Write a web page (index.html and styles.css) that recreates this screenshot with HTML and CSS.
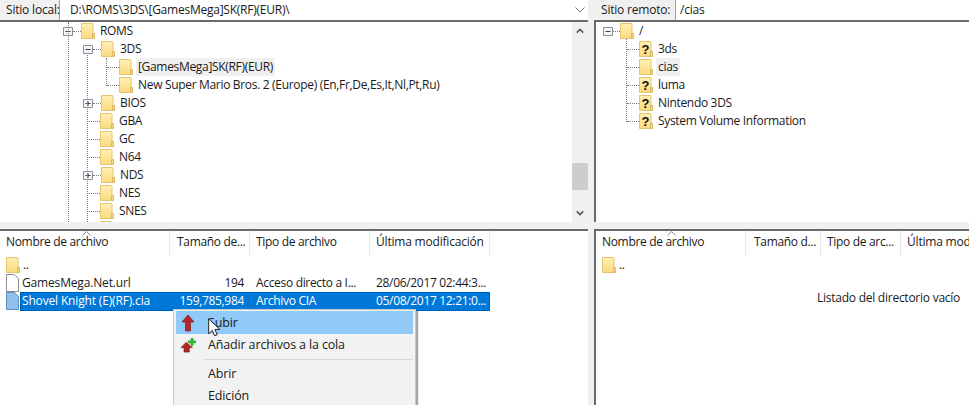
FILE: index.html
```html
<!DOCTYPE html>
<html lang="es">
<head>
<meta charset="utf-8">
<title>Sitio local y remoto</title>
<link rel="stylesheet" href="styles.css">
</head>
<body>
<svg class="defs" aria-hidden="true">
  <defs>
    <linearGradient id="fg" x1="0" y1="0" x2="0" y2="1">
      <stop offset="0" stop-color="#fff0b4"/>
      <stop offset="1" stop-color="#fbd97e"/>
    </linearGradient>
    <symbol id="folder" viewBox="0 0 14 16">
      <path d="M.5.5h11l.5 1v14H.5z" fill="url(#fg)" stroke="#e6c470"/>
      <path d="M11.5 10.500h2v5h-2z" fill="#f7d67c" stroke="#dcb863"/>
    </symbol>
    <symbol id="qfolder" viewBox="0 0 14 16">
      <path d="M.5.5h11l.5 1v14H.5z" fill="url(#fg)" stroke="#e6c470"/>
      <path d="M11.500 10.500h2v5h-2z" fill="#f7d67c" stroke="#dcb863"/>
      <text x="6.500" y="13" class="qmark">?</text>
    </symbol>
    <symbol id="minus" viewBox="0 0 10 9">
      <path d="M.5.500h9v8h-9z" fill="#f4f4f6" stroke="#8a8f9a"/>
      <path d="M2.500 4.500h5" stroke="#3c4048"/>
    </symbol>
    <symbol id="plus" viewBox="0 0 10 9">
      <path d="M.5.500h9v8h-9z" fill="#f4f4f6" stroke="#8a8f9a"/>
      <path d="M2.500 4.500h5M5 2v5" stroke="#3c4048"/>
    </symbol>
  </defs>
</svg>

<main class="app">
  <section class="pane pane-local">
    <div class="bar">
      <span class="bar-label bar-label-local">Sitio local:</span>
      <span class="bar-path">D:\ROMS\3DS\[GamesMega]SK(RF)(EUR)\</span>
      <svg class="combo" viewBox="0 0 10 6"><path d="M.5.500 5 5 9.500.5" fill="none" stroke="#7a7a7a"/></svg>
    </div>
    <div class="tree">
      <div class="tree-rows">
        <div class="guide gv g1"></div>
        <div class="guide gv g2"></div>
        <div class="guide gv g3"></div>
        <div class="row lv0"><svg class="exp"><use href="#minus"/></svg><i class="dash"></i><svg class="fold"><use href="#folder"/></svg><span class="name">ROMS</span></div>
        <div class="row lv1"><svg class="exp"><use href="#minus"/></svg><i class="dash"></i><svg class="fold"><use href="#folder"/></svg><span class="name">3DS</span></div>
        <div class="row lv2"><i class="dash long"></i><svg class="fold"><use href="#folder"/></svg><span class="name current">[GamesMega]SK(RF)(EUR)</span></div>
        <div class="row lv2"><i class="dash long"></i><svg class="fold"><use href="#folder"/></svg><span class="name">New Super Mario Bros. 2 (Europe) (En,Fr,De,Es,It,Nl,Pt,Ru)</span></div>
        <div class="row lv1"><svg class="exp"><use href="#plus"/></svg><i class="dash"></i><svg class="fold"><use href="#folder"/></svg><span class="name">BIOS</span></div>
        <div class="row lv1"><i class="dash long"></i><svg class="fold"><use href="#folder"/></svg><span class="name">GBA</span></div>
        <div class="row lv1"><i class="dash long"></i><svg class="fold"><use href="#folder"/></svg><span class="name">GC</span></div>
        <div class="row lv1"><i class="dash long"></i><svg class="fold"><use href="#folder"/></svg><span class="name">N64</span></div>
        <div class="row lv1"><svg class="exp"><use href="#plus"/></svg><i class="dash"></i><svg class="fold"><use href="#folder"/></svg><span class="name">NDS</span></div>
        <div class="row lv1"><i class="dash long"></i><svg class="fold"><use href="#folder"/></svg><span class="name">NES</span></div>
        <div class="row lv1"><i class="dash long"></i><svg class="fold"><use href="#folder"/></svg><span class="name">SNES</span></div>
        <div class="row lv1"><i class="dash long"></i><svg class="fold"><use href="#folder"/></svg></div>
      </div>
      <div class="scroll">
        <svg class="arrow" viewBox="0 0 10 6"><path d="M1 5 5 1l4 4" fill="none" stroke="#555" stroke-width="2"/></svg>
        <div class="track"><div class="thumb"></div></div>
        <svg class="arrow" viewBox="0 0 10 6"><path d="M1 1l4 4 4-4" fill="none" stroke="#555" stroke-width="2"/></svg>
      </div>
    </div>
    <div class="split"></div>
    <div class="list list-local">
      <div class="head">
        <span class="col c-name">Nombre de archivo<svg class="sort" viewBox="0 0 9 5"><path d="M.5 4.500 4.500.5l4 4" fill="none" stroke="#8a8a8a"/></svg></span>
        <span class="col c-size">Tamaño de...</span>
        <span class="col c-type">Tipo de archivo</span>
        <span class="col c-date">Última modificación</span>
      </div>
      <div class="file"><svg class="fold"><use href="#folder"/></svg><span class="up">..</span></div>
      <div class="file">
        <svg class="doc" viewBox="0 0 13 18"><path d="M.5.500h8l4 4v13H.5z" fill="#fff" stroke="#8f8f8f"/></svg>
        <span class="band">
          <span class="cell f-name">GamesMega.Net.url</span>
          <span class="cell f-size">194</span>
          <span class="cell f-type">Acceso directo a I...</span>
          <span class="cell f-date">28/06/2017 02:44:3...</span>
        </span>
      </div>
      <div class="file">
        <svg class="doc" viewBox="0 0 13 18"><path d="M.5.500h8l4 4v13H.5z" fill="#8fc1ec" stroke="#5f8fb8"/></svg>
        <span class="band band-selected">
          <span class="cell f-name">Shovel Knight (E)(RF).cia</span>
          <span class="cell f-size">159,785,984</span>
          <span class="cell f-type">Archivo CIA</span>
          <span class="cell f-date">05/08/2017 12:21:0...</span>
        </span>
      </div>
      <div class="menu">
        <div class="item hot">
          <svg class="mi" viewBox="0 0 16 18"><path d="M8 1 14 8h-3.500v9h-5V8H2z" fill="#b3262c" stroke="#7d1b20" stroke-width=".7"/></svg>
          <span>Subir</span>
        </div>
        <div class="item">
          <svg class="mi" viewBox="0 0 18 18"><path d="M7 6 14 12h-3.500v5h-6v-5H1z" fill="#b3262c" stroke="#7d1b20" stroke-width=".7"/><path d="M12 1h3v3h3v3h-3v3h-3V7H9V4h3z" fill="#34b233"/></svg>
          <span>Añadir archivos a la cola</span>
        </div>
        <div class="sep"></div>
        <div class="item"><i class="mi"></i><span>Abrir</span></div>
        <div class="item"><i class="mi"></i><span>Edición</span></div>
      </div>
      <svg class="cursor" viewBox="0 0 13 19"><path d="M.7.700v15l3.600-3.300 2.300 5.400 2.600-1.100-2.300-5.300h4.900z" fill="#fff" stroke="#222" stroke-width="1"/></svg>
    </div>
  </section>

  <section class="pane pane-remote">
    <div class="bar">
      <span class="bar-label bar-label-remote">Sitio remoto:</span>
      <span class="bar-path">/cias</span>
    </div>
    <div class="tree">
      <div class="tree-rows">
        <div class="guide gv g4"></div>
        <div class="row rv0"><svg class="exp"><use href="#minus"/></svg><i class="dash short"></i><svg class="fold"><use href="#folder"/></svg><span class="name">/</span></div>
        <div class="row rv1"><i class="dash long"></i><svg class="fold"><use href="#qfolder"/></svg><span class="name">3ds</span></div>
        <div class="row rv1"><i class="dash long"></i><svg class="fold"><use href="#folder"/></svg><span class="name current">cias</span></div>
        <div class="row rv1"><i class="dash long"></i><svg class="fold"><use href="#qfolder"/></svg><span class="name">luma</span></div>
        <div class="row rv1"><i class="dash long"></i><svg class="fold"><use href="#qfolder"/></svg><span class="name">Nintendo 3DS</span></div>
        <div class="row rv1"><i class="dash long"></i><svg class="fold"><use href="#qfolder"/></svg><span class="name">System Volume Information</span></div>
      </div>
    </div>
    <div class="split"></div>
    <div class="list">
      <div class="head">
        <span class="col r-name">Nombre de archivo<svg class="sort" viewBox="0 0 9 5"><path d="M.5 4.500 4.500.5l4 4" fill="none" stroke="#8a8a8a"/></svg></span>
        <span class="col r-size">Tamaño d...</span>
        <span class="col r-type">Tipo de arc...</span>
        <span class="col r-date">Última modificación</span>
      </div>
      <div class="file"><svg class="fold"><use href="#folder"/></svg><span class="up">..</span></div>
      <p class="empty">Listado del directorio vacío</p>
    </div>
  </section>
</main>
</body>
</html>
```
FILE: styles.css
```css
* { box-sizing: border-box; }
html, body { margin: 0; padding: 0; }
body {
  width: 969px;
  height: 405px;
  overflow: hidden;
  background: #f0f0f0;
  color: #1a1a1a;
  font: 12px/18px "Open Sans", "Noto Sans", sans-serif;
  letter-spacing: -0.32px;
}
.defs { position: absolute; width: 0; height: 0; }
.qmark { font: 800 13px "Liberation Sans", sans-serif; fill: #111; text-anchor: middle; letter-spacing: 0; }

.app { display: grid; grid-template-columns: 588px 375px; column-gap: 6px; width: 969px; height: 405px; }
.pane { display: flex; flex-direction: column; min-width: 0; height: 405px; }

.bar { height: 22px; flex: none; display: flex; align-items: center; background: #fff; border-bottom: 2px solid #696969; }
.bar-label { height: 20px; flex: none; background: #f0f0f0; border-right: 1px solid #a0a0a0; padding-left: 6px; line-height: 20px; white-space: nowrap; letter-spacing: -0.2px; }
.bar-label-local { width: 60px; }
.bar-label-remote { width: 82px; padding-left: 7px; }
.bar-path { padding-left: 10px; flex: 1; line-height: 20px; letter-spacing: -0.24px; }
.bar-label-remote + .bar-path { padding-left: 4px; }
.combo { width: 10px; height: 6px; flex: none; margin-right: 3px; }

.tree { height: 200px; flex: none; display: flex; background: #fff; overflow: hidden; }
.pane-remote .tree, .pane-remote .list { border-left: 2px solid #696969; }
.tree-rows { position: relative; flex: 1; min-width: 0; overflow: hidden; }
.row { height: 18px; display: flex; align-items: center; white-space: nowrap; }
.lv0 { padding-left: 63px; }
.lv1 { padding-left: 83px; }
.lv2 { padding-left: 107px; }
.rv0 { padding-left: 7px; }
.rv1 { padding-left: 31px; }
.exp { width: 10px; height: 9px; flex: none; }
.dash { width: 8px; height: 0; flex: none; border-top: 1px dotted #7a7a7a; }
.dash.long { width: 12px; }
.dash.short { width: 7px; }
.lv1 .dash.long { width: 13px; margin-left: 4px; }
.fold { width: 14px; height: 16px; flex: none; }
.name { margin-left: 3px; padding: 0 2px; line-height: 18px; }
.current { background: #f0f0f0; }
.guide { position: absolute; }
.gv { border-left: 1px dotted #7a7a7a; }
.g1 { left: 68px; top: 0; bottom: 0; }
.g2 { left: 87px; top: 33px; bottom: 0; }
.g3 { left: 106px; top: 36px; height: 28px; }
.g4 { left: 30px; top: 17px; height: 83px; }

.scroll { width: 16px; flex: none; background: #f0f0f0; display: flex; flex-direction: column; align-items: center; }
.arrow { width: 8px; height: 6px; flex: none; margin: 6px 0; }
.track { flex: 1; width: 100%; padding-top: 123px; }
.thumb { height: 27px; background: #cdcdcd; }

.split { height: 7px; flex: none; background: #f0f0f0; }

.list { flex: 1; min-height: 0; position: relative; background: #fff; border-top: 2px solid #696969; }
.head { height: 25px; display: flex; align-items: center; }
.col { height: 100%; flex: none; position: relative; line-height: 22px; padding-left: 6px; border-right: 1px solid #e8e8e8; white-space: nowrap; }
.c-name { width: 170px; }
.c-size { width: 80px; padding-left: 7px; }
.c-type { width: 120px; }
.c-date { width: 120px; letter-spacing: -0.2px; }
.r-name { width: 150px; }
.r-size { width: 75px; padding-left: 8px; }
.r-type { width: 80px; }
.r-date { width: 100px; border-right: 0; letter-spacing: -0.2px; }
.sort { position: absolute; left: 82px; top: 0; width: 9px; height: 5px; }
.r-name .sort { left: 71px; }

.file { height: 18px; display: flex; align-items: center; padding-left: 6px; white-space: nowrap; }
.doc { width: 13px; height: 18px; flex: none; }
.up { margin-left: 3px; }
.band { display: flex; align-items: center; height: 19px; margin-left: 1px; }
.band-selected { background: #0078d7; color: #fff; outline: 1px dotted #0a3d73; outline-offset: -1px; }
.cell { display: block; overflow: hidden; flex: none; }
.f-name { width: 150px; padding-left: 2px; letter-spacing: -0.16px; }
.f-size { width: 74px; text-align: right; }
.f-type { width: 126px; padding-left: 12px; }
.f-date { width: 120px; padding-left: 6px; }

.menu { position: absolute; left: 173px; top: 78px; width: 243px; height: 110px; background: #f2f2f2; border: 1px solid #c8c8c8; border-bottom: 0; padding: 1px 2px; box-shadow: 2px 2px 1px rgba(0,0,0,.35); font-size: 12.5px; letter-spacing: -0.15px; }
.item { height: 22px; display: flex; align-items: center; }
.item.hot { height: 23px; background: #91c9f7; }
.mi { width: 16px; height: 18px; flex: none; margin: 0 12px 0 4px; display: block; }
.sep { height: 1px; background: #d7d7d7; margin: 3px 0 3px 28px; }
.cursor { position: absolute; left: 208px; top: 87px; width: 13px; height: 19px; }

.empty { position: absolute; margin: 0; left: 221px; top: 58px; white-space: nowrap; letter-spacing: -0.25px; }
```
